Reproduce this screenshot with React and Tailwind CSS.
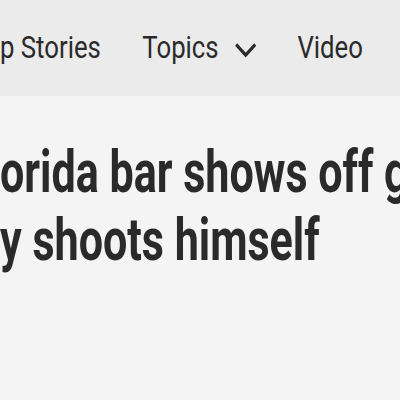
import React from "react";

const FONT = { fontFamily: '"Roboto", "Liberation Sans", sans-serif' };

// zero-width box, content overflows to the left (clipped by page edge)
const Lead = ({ children }) => (
  <span className="w-0 flex justify-end whitespace-nowrap">{children}</span>
);

const Chevron = () => (
  <svg width="28" height="16" viewBox="0 0 28 16" fill="none">
    <polyline points="2.5,2.5 14,13 25.5,2.5" stroke="#2a2a2a" strokeWidth="3.6" />
  </svg>
);

const App = () => {
  return (
    <div className="w-[400px] h-[400px] overflow-hidden bg-[#f4f4f4] text-[#2a2a2a]" style={FONT}>
      <nav className="h-[96px] bg-[#ebebeb] flex items-center">
        <div className="flex items-center whitespace-nowrap text-[31px] origin-left scale-x-[0.83]">
          <div className="flex">
            <Lead>To</Lead>
            <span>p Stories</span>
          </div>
          <div className="flex items-center ml-[50px]">
            <span>Topics</span>
            <span className="ml-[19px] mt-[3px]"><Chevron /></span>
          </div>
          <span className="ml-[48px]">Video</span>
        </div>
      </nav>

      <h1 className="mt-[42px] font-bold text-[59px] leading-[68px] whitespace-nowrap origin-left scale-x-[0.73]">
        <div className="flex">
          <Lead>Man at Fl</Lead>
          <span>orida bar shows off gun,</span>
        </div>
        <div className="flex">
          <Lead>accidentall</Lead>
          <span>y shoots himself</span>
        </div>
      </h1>
    </div>
  );
};

export default App;
